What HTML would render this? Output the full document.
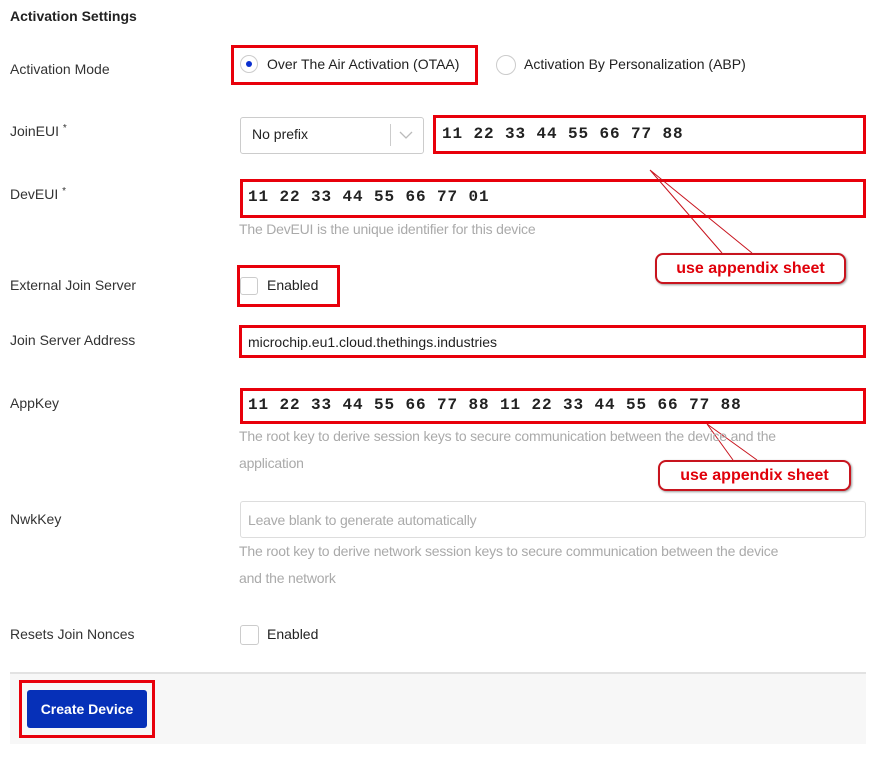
<!DOCTYPE html>
<html><head><meta charset="utf-8"><style>
body{margin:0;width:878px;height:759px;background:#fff;position:relative;font-family:"Liberation Sans",sans-serif;font-size:14px;color:#222;overflow:hidden}
.a{position:absolute;white-space:nowrap}
.lbl{font-size:14px;color:#333}
.help{font-size:14px;color:#aaa;letter-spacing:-0.2px}
.red{position:absolute;border:3px solid #e8000b;box-sizing:border-box}
.mono{font-family:"Liberation Mono",monospace;font-weight:bold;font-size:16px;letter-spacing:0.9px;color:#222;white-space:pre}
.cb{position:absolute;width:18px;height:18px;border:1px solid #ccc;border-radius:3px;box-sizing:border-box;background:#fff}
.call{position:absolute;border:2px solid #c8141e;border-radius:8px;background:#fff;color:#e0000a;font-weight:bold;font-size:16px;text-align:center;box-sizing:border-box;box-shadow:1px 1px 2px #999}
</style></head><body>
<div class="a" style="left:10px;top:8px;font-weight:bold;font-size:14px">Activation Settings</div>

<div class="a lbl" style="left:10px;top:61px">Activation Mode</div>
<div class="red" style="left:231px;top:45px;width:247px;height:40px"></div>
<div class="a" style="left:240px;top:55px;width:18px;height:18px;border:1px solid #ccc;border-radius:50%;box-sizing:border-box"><div style="position:absolute;left:5px;top:5px;width:6px;height:6px;border-radius:50%;background:#0a2fd0"></div></div>
<div class="a" style="left:267px;top:56px">Over The Air Activation (OTAA)</div>
<div class="a" style="left:496px;top:55px;width:20px;height:20px;border:1px solid #ccc;border-radius:50%;box-sizing:border-box"></div>
<div class="a" style="left:524px;top:56px">Activation By Personalization (ABP)</div>

<div class="a lbl" style="left:10px;top:123px">JoinEUI <span style="font-size:10px;vertical-align:top">*</span></div>
<div class="a" style="left:240px;top:117px;width:184px;height:37px;border:1px solid #ccc;border-radius:3px;box-sizing:border-box"></div>
<div class="a" style="left:252px;top:126px">No prefix</div>
<div class="a" style="left:390px;top:124px;width:1px;height:22px;background:#ccc"></div>
<svg class="a" style="left:399px;top:130px" width="14" height="10"><path d="M1 2 L7 8 L13 2" fill="none" stroke="#bbb" stroke-width="1.3"/></svg>
<div class="red" style="left:433px;top:115px;width:433px;height:39px"></div>
<div class="a mono" style="left:442px;top:125px">11 22 33 44 55 66 77 88</div>

<div class="a lbl" style="left:10px;top:186px">DevEUI <span style="font-size:10px;vertical-align:top">*</span></div>
<div class="red" style="left:240px;top:179px;width:626px;height:39px"></div>
<div class="a mono" style="left:248px;top:188px">11 22 33 44 55 66 77 01</div>
<div class="a help" style="left:239px;top:221px">The DevEUI is the unique identifier for this device</div>

<svg class="a" style="left:0;top:0" width="878" height="759">
<path d="M650 170 L722 253 M650 170 L752 253" stroke="#c8141e" stroke-width="1" fill="none"/>
<path d="M707 424 L733 460 M707 424 L757 460" stroke="#c8141e" stroke-width="1" fill="none"/>
</svg>
<div class="call" style="left:655px;top:253px;width:191px;height:31px;line-height:27px">use appendix sheet</div>

<div class="a lbl" style="left:10px;top:277px">External Join Server</div>
<div class="red" style="left:237px;top:265px;width:103px;height:42px"></div>
<div class="cb" style="left:240px;top:277px"></div>
<div class="a" style="left:267px;top:277px">Enabled</div>

<div class="a lbl" style="left:10px;top:332px">Join Server Address</div>
<div class="red" style="left:239px;top:325px;width:627px;height:33px"></div>
<div class="a" style="left:248px;top:334px;font-size:14px">microchip.eu1.cloud.thethings.industries</div>

<div class="a lbl" style="left:10px;top:395px">AppKey</div>
<div class="red" style="left:240px;top:388px;width:626px;height:36px"></div>
<div class="a mono" style="left:248px;top:396px">11 22 33 44 55 66 77 88 11 22 33 44 55 66 77 88</div>
<div class="a help" style="left:239px;top:428px">The root key to derive session keys to secure communication between the device and the</div>
<div class="a help" style="left:239px;top:455px">application</div>
<div class="call" style="left:658px;top:460px;width:193px;height:31px;line-height:27px">use appendix sheet</div>

<div class="a lbl" style="left:10px;top:511px">NwkKey</div>
<div class="a" style="left:240px;top:501px;width:626px;height:37px;border:1px solid #ddd;border-radius:3px;box-sizing:border-box"></div>
<div class="a help" style="left:248px;top:512px">Leave blank to generate automatically</div>
<div class="a help" style="left:239px;top:543px">The root key to derive network session keys to secure communication between the device</div>
<div class="a help" style="left:239px;top:570px">and the network</div>

<div class="a lbl" style="left:10px;top:626px">Resets Join Nonces</div>
<div class="cb" style="left:240px;top:625px;height:20px;width:19px"></div>
<div class="a" style="left:267px;top:626px">Enabled</div>

<div class="a" style="left:10px;top:672px;width:856px;height:72px;background:#f7f7f7;border-top:2px solid #e2e2e2;box-sizing:border-box"></div>
<div class="red" style="left:19px;top:680px;width:136px;height:58px"></div>
<div class="a" style="left:27px;top:690px;width:120px;height:38px;background:#0630b8;border-radius:3px;color:#fff;font-weight:bold;font-size:14px;text-align:center;line-height:38px">Create Device</div>
</body></html>
